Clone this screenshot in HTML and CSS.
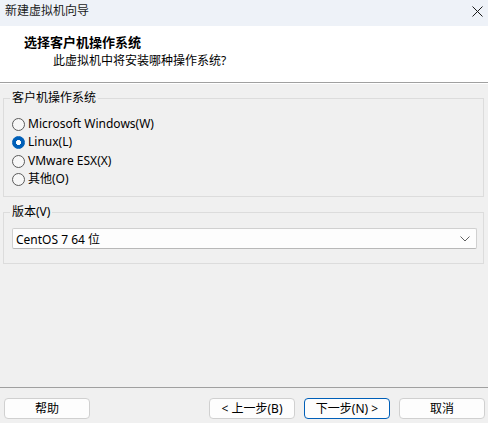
FILE: index.html
```html
<!DOCTYPE html>
<html lang="zh-CN">
<head>
<meta charset="utf-8">
<title>新建虚拟机向导</title>
<link rel="stylesheet" href="styles.css">
</head>
<body>
<div class="window">
  <div class="titlebar">
    <span class="title">新建虚拟机向导</span>
    <svg class="close" width="11" height="11" viewBox="0 0 11 11"><path d="M0.5 0.5 L10.5 10.5 M10.5 0.5 L0.5 10.5" stroke="#1a1a1a" stroke-width="1" fill="none"/></svg>
  </div>
  <div class="header">
    <div class="h-title">选择客户机操作系统</div>
    <div class="h-sub">此虚拟机中将安装哪种操作系统?</div>
  </div>
  <div class="content">
    <fieldset class="group group-os">
      <legend>客户机操作系统</legend>
      <label class="radio-row"><input type="radio" name="os" class="radio"><span>Microsoft Windows(W)</span></label>
      <label class="radio-row"><input type="radio" name="os" class="radio" checked><span>Linux(L)</span></label>
      <label class="radio-row row-3"><input type="radio" name="os" class="radio"><span>VMware ESX(X)</span></label>
      <label class="radio-row"><input type="radio" name="os" class="radio"><span>其他(O)</span></label>
    </fieldset>
    <fieldset class="group group-ver">
      <legend>版本(V)</legend>
      <div class="select">
        <span>CentOS 7 64 位</span>
        <svg class="chev" width="10" height="6" viewBox="0 0 10 6"><path d="M0.5 0.5 L5 5 L9.5 0.5" stroke="#606060" stroke-width="1" fill="none"/></svg>
      </div>
    </fieldset>
  </div>
  <div class="footer">
    <button class="btn">帮助</button>
    <div class="btn-group">
      <button class="btn">&lt; 上一步(B)</button>
      <button class="btn btn-primary">下一步(N) &gt;</button>
      <button class="btn">取消</button>
    </div>
  </div>
</div>
</body>
</html>
```
FILE: styles.css
```css
* { box-sizing: border-box; }
html, body { margin: 0; padding: 0; }
body {
  width: 488px;
  height: 423px;
  overflow: hidden;
  font-family: "Noto Sans", "Noto Sans CJK SC", sans-serif;
  font-size: 12px;
  color: #000;
  background: #f0f0f0;
}
.window {
  display: flex;
  flex-direction: column;
  height: 423px;
}
.titlebar {
  height: 26px;
  background: #eef2f8;
  display: flex;
  align-items: center;
  justify-content: space-between;
  padding: 0 5px 0 5px;
}
.title { line-height: 16px; color: #1a1a1a; margin-top: -4px; }
.close { margin-top: -4px; }
.header {
  height: 57px;
  background: #fff;
  border-bottom: 1px solid #a0a0a0;
  padding: 8px 0 0 24px;
}
.h-title {
  font-weight: bold;
  font-size: 13px;
  line-height: 16px;
}
.h-sub {
  line-height: 16px;
  margin-top: 3px;
  padding-left: 29px;
}
.content {
  flex: 1;
  padding: 0 4px 0 3px;
  border-top: 1px solid #fff;
}
.group {
  margin: 0;
  border: 1px solid #dcdcdc;
  padding: 0 6px;
  min-width: 0;
}
.group legend {
  padding: 0 2px;
  line-height: 16px;
}
.group-os { margin-top: 6px; padding-bottom: 8px; }
.group-ver { margin-top: 7px; padding-bottom: 14px; }
.radio-row {
  display: flex;
  align-items: center;
  height: 18px;
  line-height: 18px;
  padding-left: 2px;
}
.group-os .radio-row:first-of-type { margin-top: 9px; }
.group-os .row-3 { margin-top: 1px; }
.radio {
  appearance: none;
  -webkit-appearance: none;
  width: 13px;
  height: 13px;
  margin: 0 3px 0 0;
  border: 1px solid #5a5a5a;
  border-radius: 50%;
  background: #f7f7f7;
}
.radio:checked {
  border-color: #005fb8;
  background: radial-gradient(circle, #fff 0 2.2px, #005fb8 2.8px);
}
.select {
  margin: 8px 0 0 2px;
  height: 21px;
  background: #fdfdfd;
  border: 1px solid #d0d0d0;
  border-bottom-color: #b8b8b8;
  border-radius: 2px;
  display: flex;
  align-items: center;
  justify-content: space-between;
  padding: 0 6px 0 3px;
}
.footer {
  height: 36px;
  border-top: 1px solid #a0a0a0;
  display: flex;
  align-items: flex-start;
  justify-content: space-between;
  padding: 10px 3px 0 4px;
}
.btn-group { display: flex; gap: 9px; }
.btn {
  width: 86px;
  height: 21px;
  padding: 0;
  margin: 0;
  font: inherit;
  color: #000;
  background: #fdfdfd;
  border: 1px solid #d0d0d0;
  border-radius: 4px;
  line-height: 18px;
}
.btn-primary {
  border-color: #005fb8;
}
```
